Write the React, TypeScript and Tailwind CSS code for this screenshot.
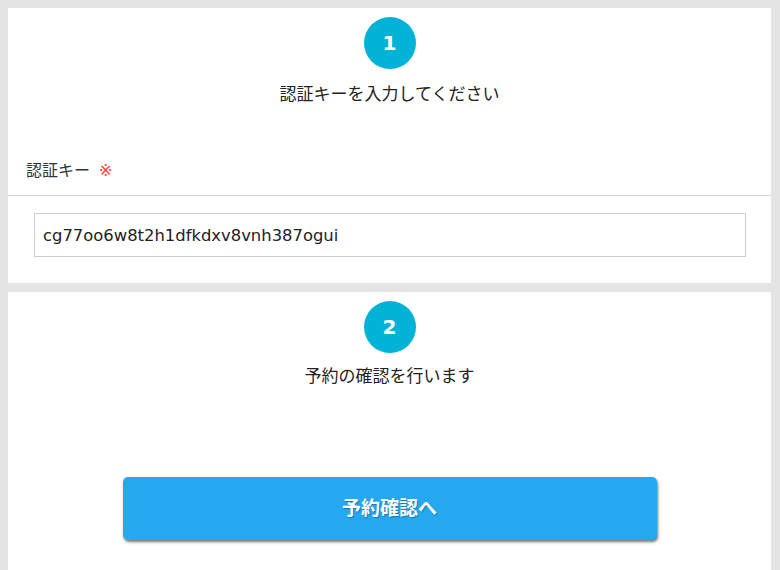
const fontCls = "font-['DejaVu_Sans','Noto_Sans_CJK_JP',sans-serif]";

function StepBadge({ n }: { n: number }) {
  return (
    <div className="flex h-[52px] w-[52px] items-center justify-center rounded-full bg-[#03b3d7] text-[20px] font-bold text-white">
      {n}
    </div>
  );
}

export default function App() {
  return (
    <div className={`${fontCls} flex min-h-screen flex-col gap-[9px] bg-[#e4e4e4] pl-2 pr-[9px] pt-2 text-[#222]`}>
      {/* step 1: auth key */}
      <section className="flex flex-col bg-white pt-[9px]">
        <div className="flex flex-col items-center">
          <StepBadge n={1} />
          <p className="mt-[13px] text-[17px] leading-6">認証キーを入力してください</p>
        </div>

        <div className="mt-[53px] border-b border-[#d2d2d2] pb-3 pl-[18px]">
          <label htmlFor="authKey" className="text-[16px] leading-6 text-[#333]">
            認証キー <span className="ml-1 text-[#ff3b3b]">※</span>
          </label>
        </div>

        <div className="pb-[26px] pl-[26px] pr-[25px] pt-[17px]">
          <input
            id="authKey"
            type="text"
            defaultValue="cg77oo6w8t2h1dfkdxv8vnh387ogui"
            className="h-[44px] w-full border border-[#cccccc] bg-white px-2 text-[16.4px] text-[#222] outline-none"
          />
        </div>
      </section>

      {/* step 2: confirm */}
      <section className="flex flex-col items-center bg-white pb-10 pt-[9px]">
        <StepBadge n={2} />
        <p className="mt-[11px] text-[17px] leading-6">予約の確認を行います</p>
        <button
          type="button"
          className="mt-[89px] h-[63px] w-[534px] rounded-[5px] bg-[#24a8f0] text-[19px] font-bold text-white shadow-[1px_2px_3px_rgba(0,0,0,0.55)] [text-shadow:1px_1px_1px_rgba(0,0,0,0.3)]"
        >
          予約確認へ
        </button>
      </section>
    </div>
  );
}
